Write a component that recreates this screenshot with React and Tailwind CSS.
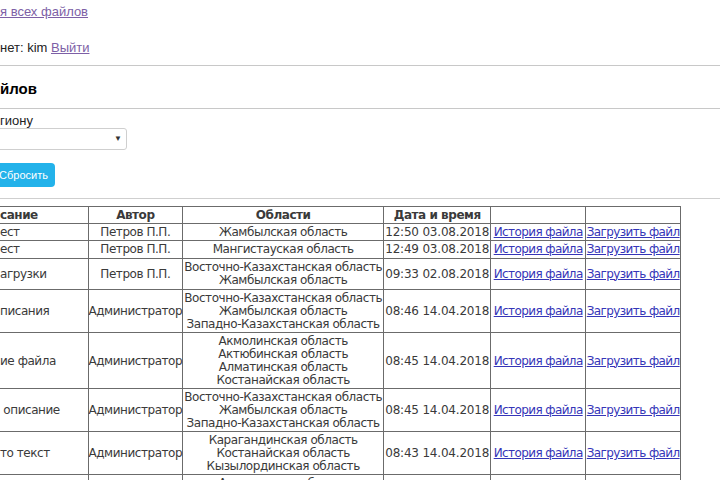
import React from "react";

const rows = [
  { d: "ест", a: "Петров П.П.", r: ["Жамбылская область"], t: "12:50 03.08.2018" },
  { d: "ест", a: "Петров П.П.", r: ["Мангистауская область"], t: "12:49 03.08.2018", x: true },
  { d: "агрузки", a: "Петров П.П.", r: ["Восточно-Казахстанская область", "Жамбылская область"], t: "09:33 02.08.2018", x: true },
  { d: "писания", a: "Администратор", r: ["Восточно-Казахстанская область", "Жамбылская область", "Западно-Казахстанская область"], t: "08:46 14.04.2018" },
  { d: "ие файла", a: "Администратор", r: ["Акмолинская область", "Актюбинская область", "Алматинская область", "Костанайская область"], t: "08:45 14.04.2018" },
  { d: "\u00a0описание", a: "Администратор", r: ["Восточно-Казахстанская область", "Жамбылская область", "Западно-Казахстанская область"], t: "08:45 14.04.2018" },
  { d: "то текст", a: "Администратор", r: ["Карагандинская область", "Костанайская область", "Кызылординская область"], t: "08:43 14.04.2018" },
  { d: "ест", a: "Администратор", r: ["Акмолинская область", "Актюбинская область"], t: "08:40 14.04.2018" },
];

export default function App() {
  const base = "border border-[#6b6b6b] px-0 pt-[2px] align-middle";
  return (
    <div className="w-[720px] h-[480px] overflow-hidden bg-white text-[#222]" style={{ fontFamily: '"Liberation Sans", Arial, sans-serif' }}>
      <div className="pt-[4px] text-[13px] leading-[15px]">
        <a className="text-[#7d5fa6] underline">я всех файлов</a>
      </div>
      <div className="mt-[21px] text-[13px] leading-[15px]">
        нет: kim <a className="text-[#7d5fa6] underline">Выйти</a>
      </div>
      <div className="mt-[10px] border-t border-[#c8c8c8]" />
      <div className="mt-[14px] text-[15px] leading-[18px] font-bold text-black">йлов</div>
      <div className="mt-[10px] border-t border-[#c8c8c8]" />
      <div className="mt-[5px] text-[13px] leading-[13px]">гиону</div>
      <div className="ml-[-40px] mt-[1px] w-[167px] h-[22px] border border-[#cfcfcf] rounded-[3px] bg-white flex items-center justify-end pr-[4px]">
        <span className="text-[8px] text-[#333]">▼</span>
      </div>
      <div className="ml-[-30px] mt-[13px] w-[85px] h-[24px] rounded-[4px] bg-[#23b2ea] flex items-center justify-end pr-[7px]">
        <span className="text-[11px] text-white">Сбросить</span>
      </div>
      <div className="mt-[11px] border-t border-[#cfcfcf]" />
      <table className="mt-[7px] ml-[-3px] border-collapse text-[12px] leading-[13px] text-[#3a3a3a] table-fixed" style={{ fontFamily: '"DejaVu Sans", Verdana, sans-serif', letterSpacing: "-0.45px" }}>
        <colgroup>
          <col className="w-[91px]" />
          <col className="w-[93px]" />
          <col className="w-[201px]" />
          <col className="w-[107px]" />
          <col className="w-[95px]" />
          <col className="w-[95px]" />
        </colgroup>
        <thead>
          <tr>
            <th className={base + " pb-[1px] border-l-0 text-left font-semibold pl-[3px]"}>сание</th>
            <th className={base + " pb-[1px] font-semibold"}>Автор</th>
            <th className={base + " pb-[1px] font-semibold"}>Области</th>
            <th className={base + " pb-[1px] font-semibold"}>Дата и время</th>
            <th className={base + " pb-[1px]"}>&nbsp;</th>
            <th className={base + " pb-[1px]"}>&nbsp;</th>
          </tr>
        </thead>
        <tbody>
          {rows.map((row, i) => {
            const cell = base + (row.x ? " pb-[2px]" : " pb-[1px]");
            return (
              <tr key={i}>
                <td className={cell + " border-l-0 text-left pl-[3px] whitespace-nowrap"}>{row.d}</td>
                <td className={cell + " text-center whitespace-nowrap"}>{row.a}</td>
                <td className={cell + " text-center whitespace-nowrap"}>
                  {row.r.map((x, j) => (
                    <div key={j}>{x}</div>
                  ))}
                </td>
                <td className={cell + " text-center whitespace-nowrap tracking-[-0.2px]"}>{row.t}</td>
                <td className={cell + " text-center whitespace-nowrap tracking-[-0.6px]"}>
                  <a className="text-[#3535b8] underline">История файла</a>
                </td>
                <td className={cell + " text-center whitespace-nowrap tracking-[-0.6px]"}>
                  <a className="text-[#3535b8] underline">Загрузить файл</a>
                </td>
              </tr>
            );
          })}
        </tbody>
      </table>
    </div>
  );
}
